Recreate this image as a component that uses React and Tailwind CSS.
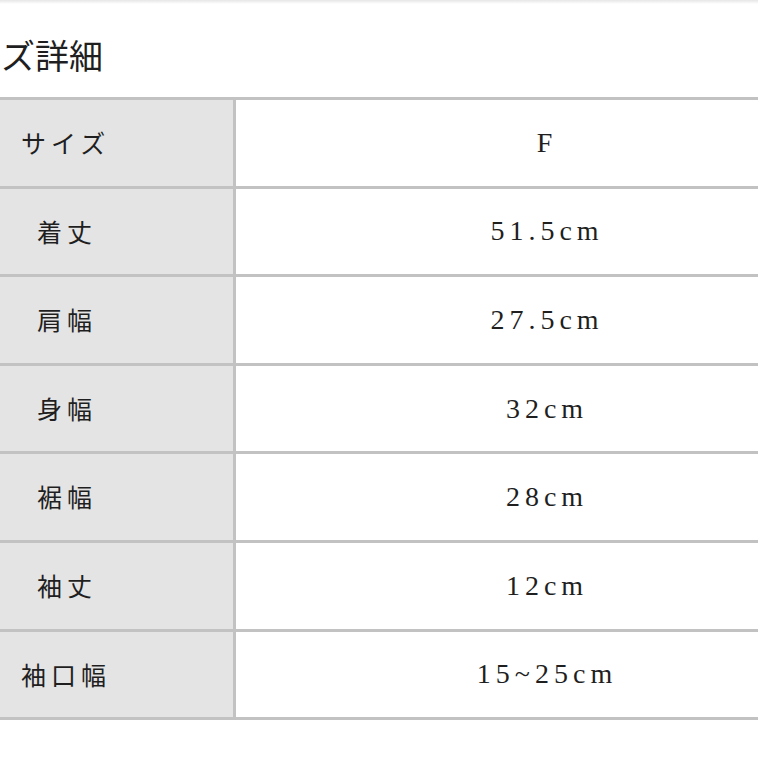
const rows = [
  { label: "サイズ", value: "F", pad: "pl-[21px]" },
  { label: "着丈", value: "51.5cm", pad: "pl-[37px]" },
  { label: "肩幅", value: "27.5cm", pad: "pl-[37px]" },
  { label: "身幅", value: "32cm", pad: "pl-[37px]" },
  { label: "裾幅", value: "28cm", pad: "pl-[37px]" },
  { label: "袖丈", value: "12cm", pad: "pl-[37px]" },
  { label: "袖口幅", value: "15~25cm", pad: "pl-[21px]" },
];

export default function App() {
  return (
    <div className="w-[758px] h-[758px] overflow-hidden bg-white text-[#1f1f1f]">
      <div className="h-[4px] bg-gradient-to-b from-[#e6e6e6] to-white" />
      <div className="pt-[34px] overflow-visible">
        <h2
          className="ml-[-66px] text-[34px] leading-[34px] font-normal whitespace-nowrap"
          style={{ fontFamily: '"Noto Sans CJK JP", sans-serif' }}
        >
          サイズ詳細
        </h2>
      </div>
      <div className="mt-[25px] w-[858px] border-t-[3px] border-[#c2c2c2]">
        {rows.map((r) => (
          <div
            key={r.label}
            className="flex h-[88.6px] border-b-[3px] border-[#c2c2c2]"
          >
            <div
              className={`w-[236px] shrink-0 flex items-center bg-[#e4e4e4] border-r-[3px] border-[#c2c2c2] text-[25px] tracking-[5px] ${r.pad}`}
              style={{ fontFamily: '"Noto Sans CJK JP", sans-serif' }}
            >
              {r.label}
            </div>
            <div
              className="flex-1 flex items-center justify-center text-[28px] tracking-[5px]"
              style={{ fontFamily: '"Liberation Serif", "Noto Sans CJK JP", serif' }}
            >
              {r.value}
            </div>
          </div>
        ))}
      </div>
    </div>
  );
}
